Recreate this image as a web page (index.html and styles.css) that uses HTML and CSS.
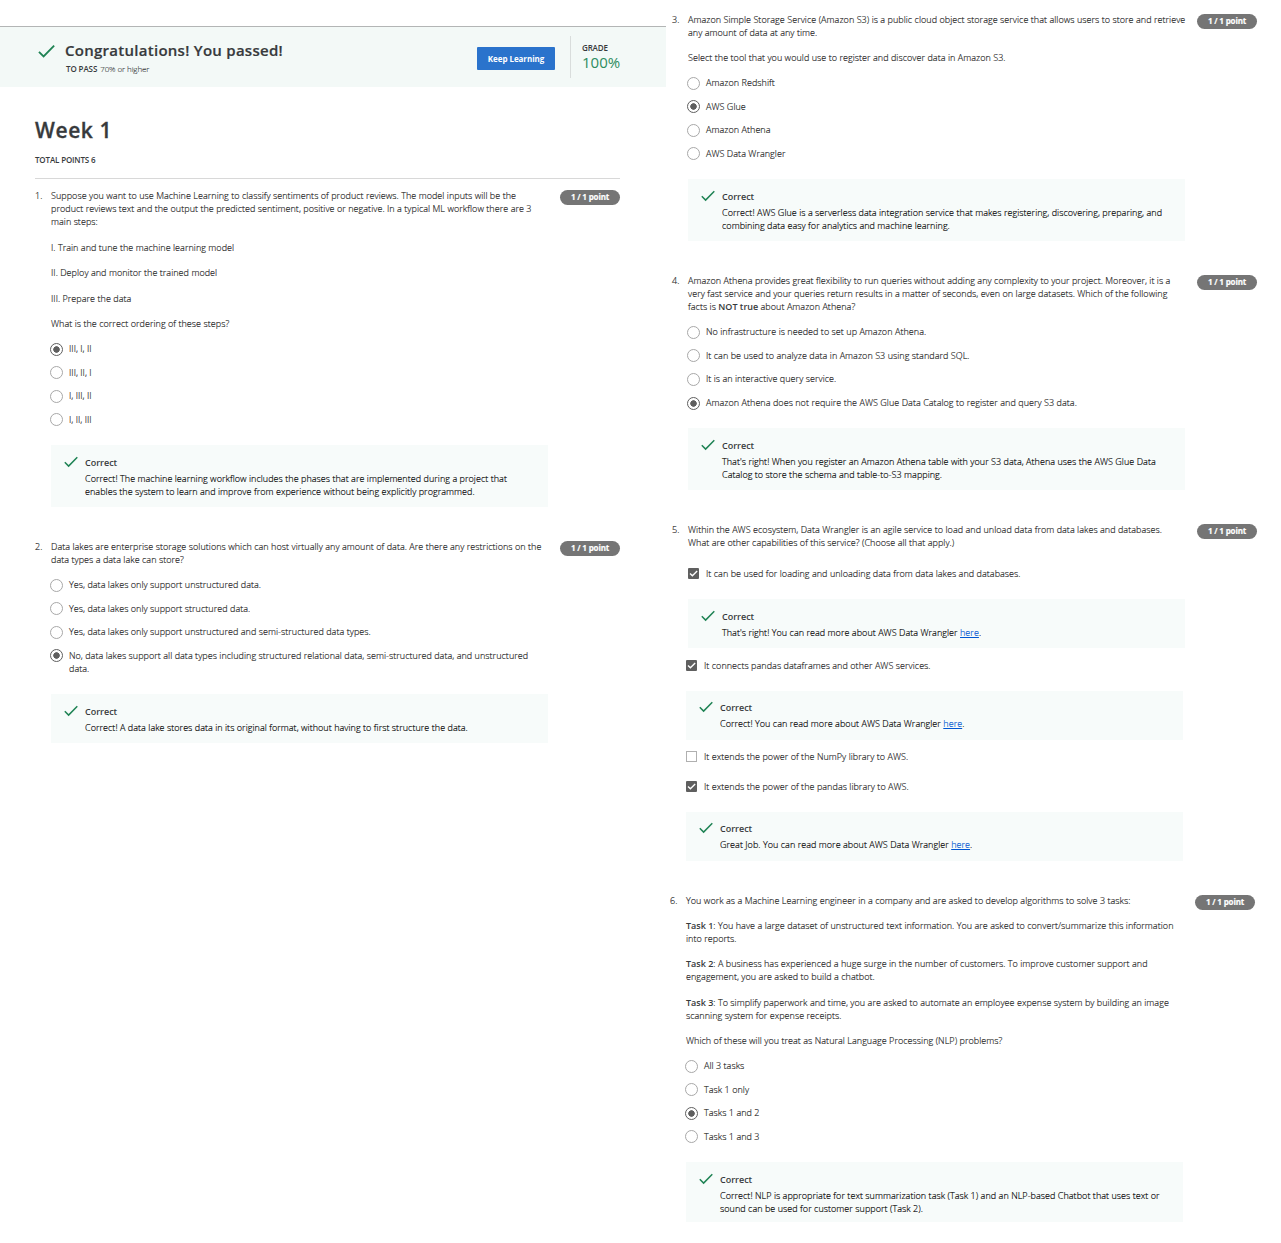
FILE: index.html
```html
<!DOCTYPE html>
<html lang="en">
<head>
<meta charset="utf-8">
<title>Week 1 – Quiz results</title>
<link rel="stylesheet" href="styles.css">
</head>
<body>
<svg class="defs" aria-hidden="true">
  <symbol id="check" viewBox="0 0 14 12"><path d="M0.8 6.3 L4.6 10.1 L13.3 1.2" fill="none" stroke="#1f8354" stroke-width="1.5"/></symbol>
  <symbol id="tick" viewBox="0 0 12 12"><path d="M2.2 5.9 L4.8 8.5 L10 3.3" fill="none" stroke="#fff" stroke-width="1.5"/></symbol>
</svg>
<main class="page">
  <div class="column left">
    <header class="banner">
      <svg class="banner-check"><use href="#check"/></svg>
      <div class="banner-text">
        <h1>Congratulations! You passed!</h1>
        <div class="to-pass"><b>TO PASS</b> 70% or higher</div>
      </div>
      <button class="keep">Keep Learning</button>
      <div class="grade"><b>GRADE</b><span>100%</span></div>
    </header>
    <div class="title">
      <h2>Week 1</h2>
      <div class="total">TOTAL POINTS 6</div>
    </div>

    <section class="question">
      <span class="num">1.</span>
      <div class="body">
        <p>Suppose you want to use Machine Learning to classify sentiments of product reviews. The model inputs will be the<br>product reviews text and the output the predicted sentiment, positive or negative. In a typical ML workflow there are 3<br>main steps:</p>
        <p>I. Train and tune the machine learning model</p>
        <p>II. Deploy and monitor the trained model</p>
        <p>III. Prepare the data</p>
        <p>What is the correct ordering of these steps?</p>
        <ul class="options">
          <li><i class="radio on"></i>III, I, II</li>
          <li><i class="radio"></i>III, II, I</li>
          <li><i class="radio"></i>I, III, II</li>
          <li><i class="radio"></i>I, II, III</li>
        </ul>
        <div class="feedback"><svg><use href="#check"/></svg><b>Correct</b>
          <p>Correct! The machine learning workflow includes the phases that are implemented during a project that<br>enables the system to learn and improve from experience without being explicitly programmed.</p></div>
      </div>
      <span class="badge">1 / 1 point</span>
    </section>

    <section class="question">
      <span class="num">2.</span>
      <div class="body">
        <p>Data lakes are enterprise storage solutions which can host virtually any amount of data. Are there any restrictions on the<br>data types a data lake can store?</p>
        <ul class="options">
          <li><i class="radio"></i>Yes, data lakes only support unstructured data.</li>
          <li><i class="radio"></i>Yes, data lakes only support structured data.</li>
          <li><i class="radio"></i>Yes, data lakes only support unstructured and semi-structured data types.</li>
          <li><i class="radio on"></i>No, data lakes support all data types including structured relational data, semi-structured data, and unstructured<br>data.</li>
        </ul>
        <div class="feedback"><svg><use href="#check"/></svg><b>Correct</b>
          <p>Correct! A data lake stores data in its original format, without having to first structure the data.</p></div>
      </div>
      <span class="badge">1 / 1 point</span>
    </section>
  </div>

  <div class="column right">
    <section class="question">
      <span class="num">3.</span>
      <div class="body">
        <p>Amazon Simple Storage Service (Amazon S3) is a public cloud object storage service that allows users to store and retrieve<br>any amount of data at any time.</p>
        <p>Select the tool that you would use to register and discover data in Amazon S3.</p>
        <ul class="options">
          <li><i class="radio"></i>Amazon Redshift</li>
          <li><i class="radio on"></i>AWS Glue</li>
          <li><i class="radio"></i>Amazon Athena</li>
          <li><i class="radio"></i>AWS Data Wrangler</li>
        </ul>
        <div class="feedback"><svg><use href="#check"/></svg><b>Correct</b>
          <p>Correct! AWS Glue is a serverless data integration service that makes registering, discovering, preparing, and<br>combining data easy for analytics and machine learning.</p></div>
      </div>
      <span class="badge">1 / 1 point</span>
    </section>

    <section class="question">
      <span class="num">4.</span>
      <div class="body">
        <p>Amazon Athena provides great flexibility to run queries without adding any complexity to your project. Moreover, it is a<br>very fast service and your queries return results in a matter of seconds, even on large datasets. Which of the following<br>facts is <b>NOT true</b> about Amazon Athena?</p>
        <ul class="options">
          <li><i class="radio"></i>No infrastructure is needed to set up Amazon Athena.</li>
          <li><i class="radio"></i>It can be used to analyze data in Amazon S3 using standard SQL.</li>
          <li><i class="radio"></i>It is an interactive query service.</li>
          <li><i class="radio on"></i>Amazon Athena does not require the AWS Glue Data Catalog to register and query S3 data.</li>
        </ul>
        <div class="feedback"><svg><use href="#check"/></svg><b>Correct</b>
          <p>That's right! When you register an Amazon Athena table with your S3 data, Athena uses the AWS Glue Data<br>Catalog to store the schema and table-to-S3 mapping.</p></div>
      </div>
      <span class="badge">1 / 1 point</span>
    </section>

    <section class="question multi">
      <span class="num">5.</span>
      <div class="body">
        <p>Within the AWS ecosystem, Data Wrangler is an agile service to load and unload data from data lakes and databases.<br>What are other capabilities of this service? (Choose all that apply.)</p>
        <div class="choice first"><i class="box on"><svg><use href="#tick"/></svg></i>It can be used for loading and unloading data from data lakes and databases.</div>
        <div class="feedback"><svg><use href="#check"/></svg><b>Correct</b>
          <p>That's right! You can read more about AWS Data Wrangler <a href="#">here</a>.</p></div>
        <div class="outdent">
          <div class="choice"><i class="box on"><svg><use href="#tick"/></svg></i>It connects pandas dataframes and other AWS services.</div>
          <div class="feedback"><svg><use href="#check"/></svg><b>Correct</b>
            <p>Correct! You can read more about AWS Data Wrangler <a href="#">here</a>.</p></div>
          <div class="choice"><i class="box"></i>It extends the power of the NumPy library to AWS.</div>
          <div class="choice next"><i class="box on"><svg><use href="#tick"/></svg></i>It extends the power of the pandas library to AWS.</div>
          <div class="feedback"><svg><use href="#check"/></svg><b>Correct</b>
            <p>Great Job. You can read more about AWS Data Wrangler <a href="#">here</a>.</p></div>
        </div>
      </div>
      <span class="badge">1 / 1 point</span>
    </section>

    <section class="question outdent last">
      <span class="num">6.</span>
      <div class="body">
        <p>You work as a Machine Learning engineer in a company and are asked to develop algorithms to solve 3 tasks:</p>
        <p><b>Task 1</b>: You have a large dataset of unstructured text information. You are asked to convert/summarize this information<br>into reports.</p>
        <p><b>Task 2</b>: A business has experienced a huge surge in the number of customers. To improve customer support and<br>engagement, you are asked to build a chatbot.</p>
        <p><b>Task 3</b>: To simplify paperwork and time, you are asked to automate an employee expense system by building an image<br>scanning system for expense receipts.</p>
        <p>Which of these will you treat as Natural Language Processing (NLP) problems?</p>
        <ul class="options">
          <li><i class="radio"></i>All 3 tasks</li>
          <li><i class="radio"></i>Task 1 only</li>
          <li><i class="radio on"></i>Tasks 1 and 2</li>
          <li><i class="radio"></i>Tasks 1 and 3</li>
        </ul>
        <div class="feedback"><svg><use href="#check"/></svg><b>Correct</b>
          <p>Correct! NLP is appropriate for text summarization task (Task 1) and an NLP-based Chatbot that uses text or<br>sound can be used for customer support (Task 2).</p></div>
      </div>
      <span class="badge">1 / 1 point</span>
    </section>
  </div>
</main>
</body>
</html>
```
FILE: styles.css
```css
* { box-sizing: border-box; }
body {
  margin: 0;
  background: #fff;
  color: #1c1c1c;
  font: 300 9px/13px "Open Sans", sans-serif;
  white-space: nowrap;
}
h1, h2, p, ul { margin: 0; padding: 0; }
ul { list-style: none; }
b { font-weight: 600; color: #373a3c; letter-spacing: 0; -webkit-text-stroke: 0; }
a { color: #0056d2; }
.defs { position: absolute; width: 0; height: 0; }

.page { display: flex; width: 1281px; height: 1243px; overflow: hidden; }
.left { width: 666px; padding-top: 26px; }
.right { padding: 12.6px 0 0 6px; }

.banner {
  display: flex;
  height: 61px;
  padding-left: 38px;
  border-top: 1px solid #b3b5b5;
  background: #f3f9f7;
}
.banner-check { width: 17px; height: 15px; margin-top: 17px; }
.banner-text { width: 422px; padding: 13px 0 0 10px; color: #373a3c; }
h1 { font-size: 15px; line-height: 20px; font-weight: 600; letter-spacing: 0.27px; -webkit-text-stroke: 0.2px; }
.to-pass { padding: 3px 0 0 1px; font-size: 8px; line-height: 12px; letter-spacing: -0.1px; -webkit-text-stroke: 0.1px; }
.to-pass b { margin-right: 1px; letter-spacing: -0.1px; }
.keep {
  width: 78px;
  height: 23px;
  margin-top: 20px;
  padding: 0;
  border: 0;
  border-radius: 1px;
  background: #2a73cc;
  color: #fff;
  font: 700 8px/22px "Open Sans", sans-serif;
  letter-spacing: -0.05px;
}
.grade {
  display: flex;
  flex-direction: column;
  height: 42px;
  margin: 9px 0 0 15px;
  padding: 5px 0 0 11px;
  border-left: 1px solid #d9dddc;
}
.grade b { font-size: 8px; line-height: 13px; letter-spacing: -0.15px; }
.grade span { font-size: 15px; line-height: 17px; font-weight: 400; color: #2d8c5e; }

.title {
  width: 585px;
  height: 92px;
  margin-left: 35px;
  padding-top: 28px;
  border-bottom: 1px solid #d8d8d8;
  color: #373a3c;
}
h2 { font-size: 21px; line-height: 31px; font-weight: 600; letter-spacing: 0.6px; -webkit-text-stroke: 0.3px; }
.total { margin-top: 7px; font-size: 8px; font-weight: 600; letter-spacing: -0.15px; }

.question {
  display: grid;
  grid-template-columns: 16px 497px 60px;
  letter-spacing: 0.045px;
  -webkit-text-stroke: 0.15px;
}
.left .question { margin: 33px 0 0 35px; }
.left .title + .question { margin-top: 10.4px; }
.right .question + .question { margin-top: 33px; }
.badge {
  width: 60px;
  height: 15px;
  margin: 0.9px 0 0 12px;
  border-radius: 8px;
  background: #757575;
  color: #fff;
  font-size: 8px;
  line-height: 14px;
  font-weight: 700;
  letter-spacing: -0.15px;
  text-align: center;
}
.right .badge { margin-top: 1.1px; }
.body > p + p { margin-top: 12.4px; }

.options { padding-top: 12px; }
.options li, .choice { display: grid; grid-template-columns: 18px 1fr; }
.options li + li { margin-top: 10.6px; }
.radio {
  width: 13px;
  height: 13px;
  margin: 0.6px 0 -0.6px -1px;
  border: 1px solid #a8a8a8;
  border-radius: 50%;
}
.radio.on {
  border-color: #5f5f5f;
  background: radial-gradient(circle, #5f5f5f 2.9px, transparent 3.6px);
}
.box { width: 11px; height: 11px; margin-top: 1px; border: 1px solid #b0b0b0; }
.box.on { border: 0; border-radius: 1px; background: #5f5f5f; }
.box svg { display: block; width: 11px; height: 11px; }

.feedback {
  display: grid;
  grid-template-columns: 34px 1fr;
  margin-top: 19px;
  padding: 10.8px 0 9.2px;
  background: #f7fbfa;
}
.options + .feedback { margin-top: 19.4px; }
.feedback svg { width: 14px; height: 12px; margin-left: 13px; }
.feedback p { grid-column: 2; margin-top: 3px; color: #000; }
.last .feedback { padding-bottom: 7.4px; }

.choice { margin-top: 10px; }
.choice.first { margin-top: 18px; }
.choice.next { margin-top: 17px; }
.outdent { margin-left: -2px; }
.body .outdent { width: 497px; padding-top: 0.3px; }
```
